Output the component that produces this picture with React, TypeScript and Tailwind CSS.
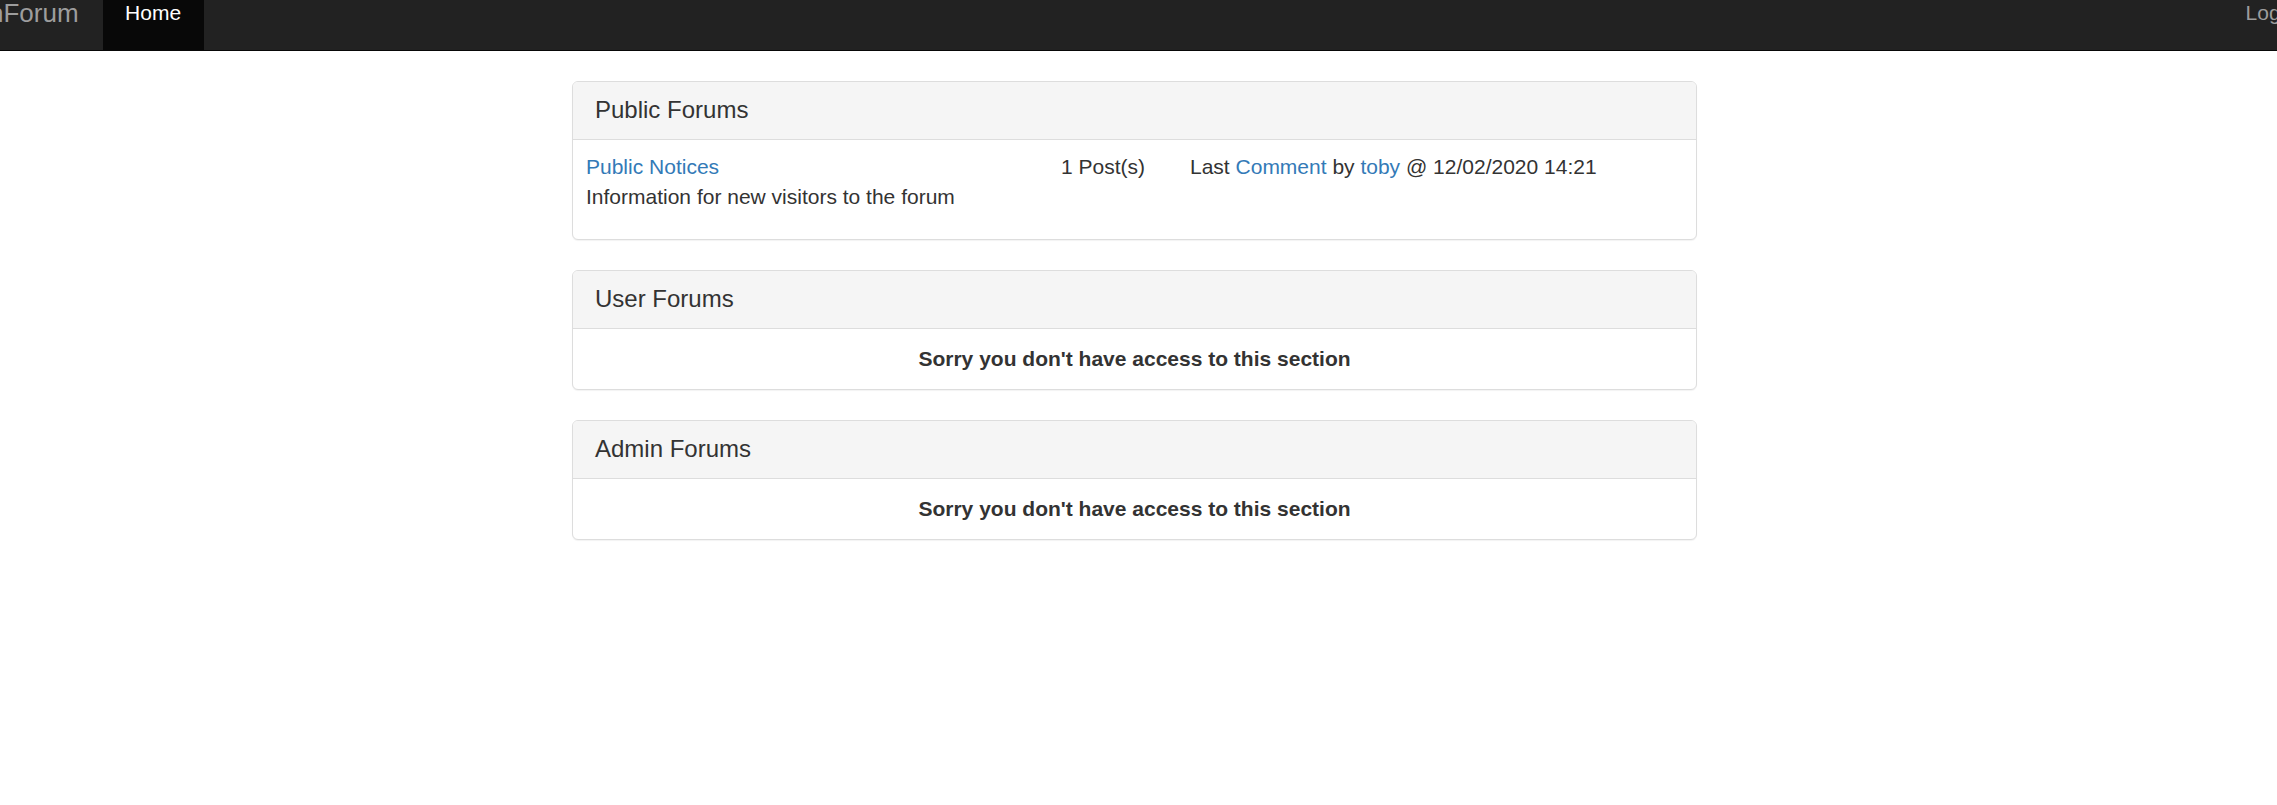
import React from "react";

const font = { fontFamily: '"Liberation Sans", Arial, Helvetica, sans-serif' };

function Panel({ title, children }: { title: string; children: React.ReactNode }) {
  return (
    <div className="mb-[30px] rounded-[6px] border border-[#dddddd] bg-white shadow-[0_1px_1px_rgba(0,0,0,0.05)]">
      <div className="rounded-t-[5px] border-b border-[#dddddd] bg-[#f5f5f5] px-[22px] pb-[16px] pt-[15px] text-[24px] leading-[26px] text-[#333333]">
        {title}
      </div>
      {children}
    </div>
  );
}

function NoAccess() {
  return (
    <div className="py-[15px] text-center text-[21px] font-bold leading-[30px] text-[#333333]">
      Sorry you don&apos;t have access to this section
    </div>
  );
}

export default function App() {
  return (
    <div className="min-h-[805px] w-full overflow-hidden bg-white" style={font}>
      <nav className="flex h-[51px] overflow-hidden border-b border-[#080808] bg-[#222222]">
        <div className="-ml-[11px] h-[50px] pr-[24px] text-[26px] leading-[26px] text-[#9d9d9d]">nForum</div>
        <a className="flex h-[50px] w-[101px] justify-center bg-[#080808] text-[21px] leading-[30px] text-white">
          <span className="-mt-[2px]">Home</span>
        </a>
        <a className="-mr-[20px] ml-auto h-[50px] text-[21px] leading-[30px] text-[#9d9d9d]">
          <span className="-mt-[2px] block">Login</span>
        </a>
      </nav>

      <div className="mx-auto mt-[30px] w-[1133px] pr-[8px]">
        <Panel title="Public Forums">
          <div className="flex pb-[27px] pl-[13px] pt-[12px] text-[21px] leading-[30px] text-[#333333]">
            <div className="w-[475px] shrink-0">
              <a className="text-[#337ab7]">Public Notices</a>
              <div>Information for new visitors to the forum</div>
            </div>
            <div className="w-[129px] shrink-0">1 Post(s)</div>
            <div>
              Last <a className="text-[#337ab7]">Comment</a> by <a className="text-[#337ab7]">toby</a> @ 12/02/2020 14:21
            </div>
          </div>
        </Panel>

        <Panel title="User Forums">
          <NoAccess />
        </Panel>

        <Panel title="Admin Forums">
          <NoAccess />
        </Panel>
      </div>
    </div>
  );
}
